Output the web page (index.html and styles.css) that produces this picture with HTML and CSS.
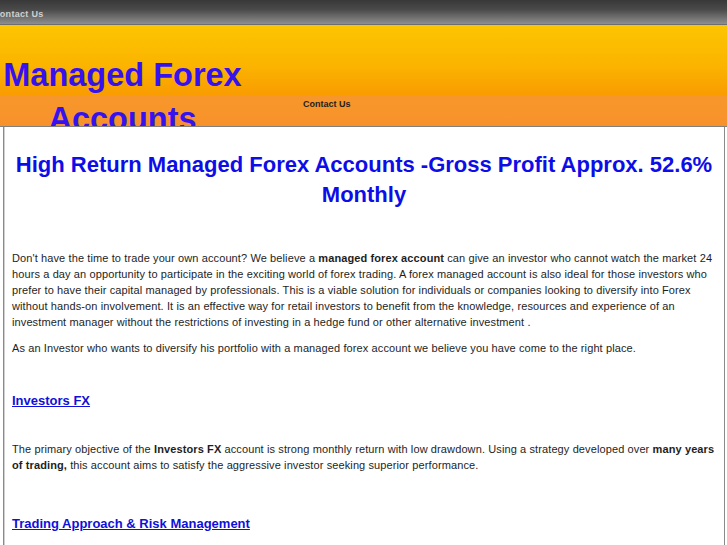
FILE: index.html
```html
<!DOCTYPE html>
<html>
<head>
<meta charset="utf-8">
<title>Managed Forex Accounts</title>
<link rel="stylesheet" href="styles.css">
</head>
<body>
<div class="topbar"><a class="topbar-link" href="#">Contact Us</a></div>
<div class="header">
  <div class="logo">Managed Forex Accounts</div>
  <a class="nav-link" href="#">Contact Us</a>
</div>
<div class="content">
  <h1 class="headline">High Return Managed Forex Accounts -Gross Profit Approx. 52.6% Monthly</h1>
  <p class="text first">Don't have the time to trade your own account? We believe a <b>managed forex account</b> can give an investor who cannot watch the market 24 hours a day an opportunity to participate in the exciting world of forex trading. A forex managed account is also ideal for those investors who prefer to have their capital managed by professionals. This is a viable solution for individuals or companies looking to diversify into Forex without hands-on involvement. It is an effective way for retail investors to benefit from the knowledge, resources and experience of an investment manager without the restrictions of investing in a hedge fund or other alternative investment .</p>
  <p class="text">As an Investor who wants to diversify his portfolio with a managed forex account we believe you have come to the right place.</p>
  <h2 class="section sec-1"><a href="#">Investors FX</a></h2>
  <p class="text after-sec">The primary objective of the <b>Investors FX</b> account is strong monthly return with low drawdown. Using a strategy developed over <b>many years of trading,</b> this account aims to satisfy the aggressive investor seeking superior performance.</p>
  <h2 class="section sec-2"><a href="#">Trading Approach &amp; Risk Management</a></h2>
</div>
</body>
</html>
```
FILE: styles.css
```css
html, body {
  margin: 0;
  padding: 0;
  background: #ffffff;
  font-family: "Liberation Sans", Arial, sans-serif;
}

.topbar {
  height: 24px;
  background: linear-gradient(to bottom, #383838 0%, #4a4a4a 40%, #8e8e8e 100%);
  border-bottom: 1px solid #6e6e6e;
  overflow: hidden;
}

.topbar-link {
  display: block;
  margin-left: -7px;
  padding-top: 9px;
  font-size: 9px;
  line-height: 11px;
  font-weight: bold;
  color: #d0d0d0;
  text-decoration: none;
  letter-spacing: 0.3px;
}

.header {
  height: 101px;
  border-bottom: 1px solid #808080;
  display: flex;
  align-items: flex-start;
  overflow: hidden;
  background: linear-gradient(to bottom, #fdc500 0%, #fbb400 40%, #f99c00 69%, #f7972a 69.5%, #f7922a 100%);
}

.logo {
  width: 245px;
  flex: none;
  padding-top: 29px;
  text-align: center;
  font-size: 32.5px;
  line-height: 43.5px;
  font-weight: bold;
  color: #3512ee;
}

.nav-link {
  margin-left: 58px;
  margin-top: 73px;
  font-size: 9px;
  line-height: 12px;
  font-weight: bold;
  color: #222222;
  text-decoration: none;
}

.content {
  margin: 0 2px 0 3px;
  border-left: 1px solid #8a8a8a;
  border-right: 1px solid #8a8a8a;
  box-shadow: inset 1px 0 0 #d0d0d0;
  padding: 23px 8px 20px 8px;
  background: #ffffff;
}

.headline {
  margin: 0 0 40px 0;
  text-align: center;
  font-size: 22px;
  line-height: 30px;
  font-weight: bold;
  color: #0d0de8;
}

.text {
  margin: 0 0 10px 0;
  font-size: 11px;
  line-height: 16px;
  letter-spacing: 0.11px;
  color: #1e1e1e;
}

.section {
  margin: 37px 0 0 0;
  font-size: 13px;
  line-height: 16px;
  font-weight: bold;
}

.section a {
  color: #1010d8;
  text-decoration: underline;
}

.sec-1 {
  margin-top: 37px;
}

.after-sec {
  margin-top: 32px;
}

.sec-2 {
  margin-top: 43px;
}
```
